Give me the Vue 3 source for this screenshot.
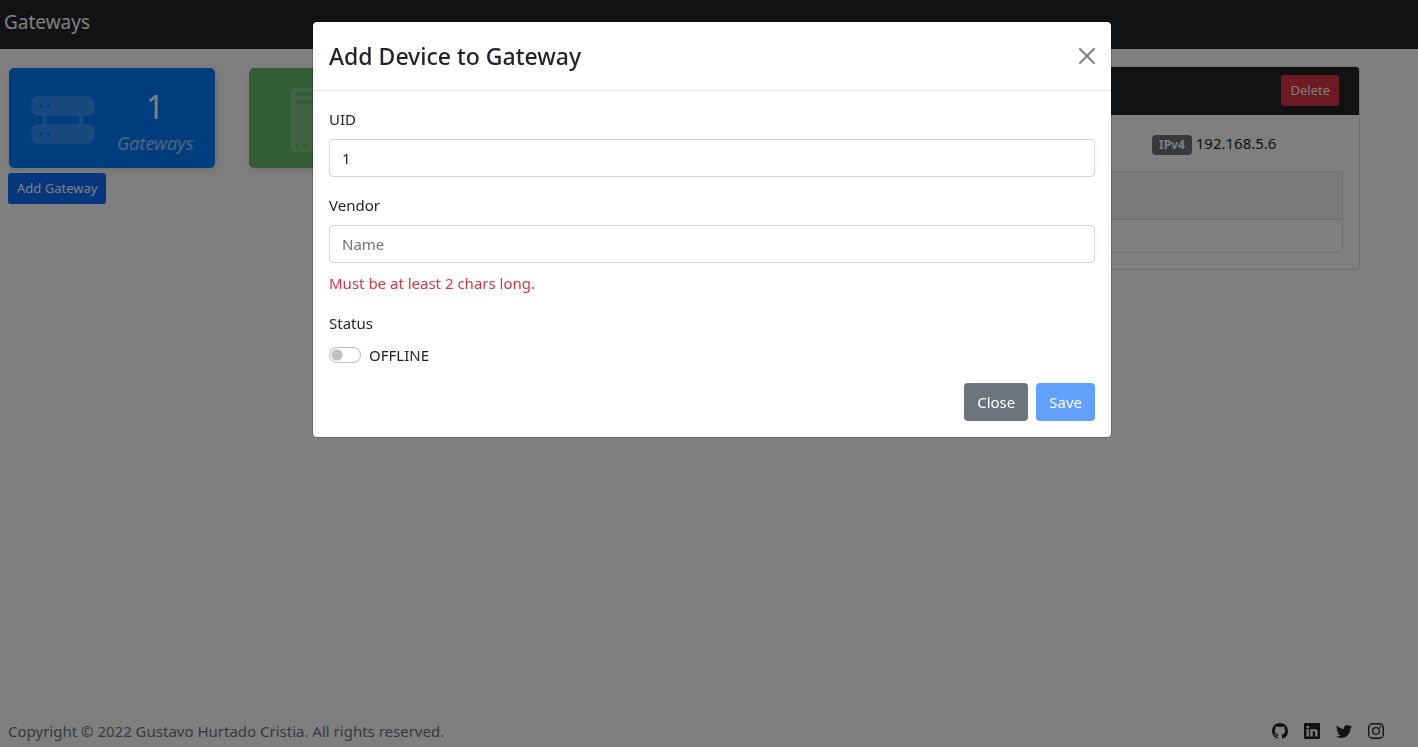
<script setup>
import { computed, ref } from 'vue'

const uid = ref('1')
const vendor = ref('')
const online = ref(false)
const invalid = computed(() => vendor.value.length < 2)
</script>

<template>
  <div class="page">
    <header class="navbar"><a class="brand" href="#">Gateways</a></header>

    <main class="content">
      <section class="summary">
        <div class="tiles">
          <article class="tile blue">
            <svg class="tile-icon" viewBox="0 0 16 16" aria-hidden="true">
              <path d="M2 2a2 2 0 0 0-2 2v1a2 2 0 0 0 2 2h1v2H2a2 2 0 0 0-2 2v1a2 2 0 0 0 2 2h12a2 2 0 0 0 2-2v-1a2 2 0 0 0-2-2h-1V7h1a2 2 0 0 0 2-2V4a2 2 0 0 0-2-2H2zm.5 3a.5.5 0 1 1 0-1 .5.5 0 0 1 0 1zm2 0a.5.5 0 1 1 0-1 .5.5 0 0 1 0 1zm-2 7a.5.5 0 1 1 0-1 .5.5 0 0 1 0 1zm2 0a.5.5 0 1 1 0-1 .5.5 0 0 1 0 1zM12 7v2H4V7h8z" />
            </svg>
            <div class="tile-text">
              <span class="count">1</span>
              <span class="caption">Gateways</span>
            </div>
          </article>
          <article class="tile green">
            <svg class="tile-icon" viewBox="0 0 16 16" aria-hidden="true">
              <path fill-rule="evenodd" d="M5 0a1 1 0 0 0-1 1v14a1 1 0 0 0 1 1h6a1 1 0 0 0 1-1V1a1 1 0 0 0-1-1H5zm.5 14a.5.5 0 1 1 0 1 .5.5 0 0 1 0-1zm2 0a.5.5 0 1 1 0 1 .5.5 0 0 1 0-1zM5 1.500a.5.5 0 0 1 .5-.5h5a.5.5 0 0 1 0 1h-5a.5.5 0 0 1-.5-.5zM5.500 3h5a.5.5 0 0 1 0 1h-5a.5.5 0 0 1 0-1z" />
            </svg>
          </article>
        </div>
        <button class="btn small primary" type="button">Add Gateway</button>
      </section>

      <section class="gateway">
        <div class="gateway-head">
          <button class="btn small danger" type="button">Delete</button>
        </div>
        <div class="gateway-body">
          <p class="address"><span class="badge">IPv4</span> 192.168.5.6</p>
          <div class="devices">
            <div class="devices-head"></div>
            <div class="devices-row"></div>
          </div>
        </div>
      </section>
    </main>

    <footer class="footer">
      <span>Copyright © 2022 Gustavo Hurtado Cristia. All rights reserved.</span>
      <nav class="social">
        <a href="#" aria-label="GitHub">
          <svg viewBox="0 0 16 16"><path d="M8 0C3.58 0 0 3.58 0 8c0 3.54 2.29 6.53 5.47 7.59.4.07.55-.17.55-.38 0-.19-.01-.82-.01-1.49-2.01.37-2.53-.49-2.69-.94-.09-.23-.48-.94-.82-1.13-.28-.15-.68-.52-.01-.53.63-.01 1.08.58 1.23.82.72 1.21 1.87.87 2.33.66.07-.52.28-.87.51-1.07-1.78-.2-3.64-.89-3.64-3.95 0-.87.31-1.59.82-2.15-.08-.2-.36-1.02.08-2.12 0 0 .67-.21 2.2.82.64-.18 1.32-.27 2-.27.68 0 1.36.09 2 .27 1.53-1.04 2.2-.82 2.2-.82.44 1.1.16 1.92.08 2.12.51.56.82 1.27.82 2.15 0 3.07-1.87 3.75-3.65 3.95.29.25.54.73.54 1.48 0 1.07-.01 1.93-.01 2.2 0 .21.15.46.55.38A8.012 8.012 0 0 0 16 8c0-4.42-3.58-8-8-8z" /></svg>
        </a>
        <a href="#" aria-label="LinkedIn">
          <svg viewBox="0 0 16 16"><path d="M0 1.146C0 .513.526 0 1.175 0h13.650C15.474 0 16 .513 16 1.146v13.708c0 .633-.526 1.146-1.175 1.146H1.175C.526 16 0 15.487 0 14.854V1.146zm4.943 12.248V6.169H2.542v7.225h2.401zm-1.200-8.212c.837 0 1.358-.554 1.358-1.248-.015-.709-.520-1.248-1.342-1.248-.822 0-1.359.540-1.359 1.248 0 .694.521 1.248 1.327 1.248h.016zm4.908 8.212V9.359c0-.216.016-.432.080-.586.173-.431.568-.878 1.232-.878.869 0 1.216.662 1.216 1.634v3.865h2.401V9.250c0-2.220-1.184-3.252-2.764-3.252-1.274 0-1.845.700-2.165 1.193v.025h-.016a5.540 5.540 0 0 1 .016-.025V6.169h-2.400c.030.678 0 7.225 0 7.225h2.400z" /></svg>
        </a>
        <a href="#" aria-label="Twitter">
          <svg viewBox="0 0 16 16"><path d="M5.026 15c6.038 0 9.341-5.003 9.341-9.334 0-.14 0-.282-.006-.422A6.685 6.685 0 0 0 16 3.542a6.658 6.658 0 0 1-1.889.518 3.301 3.301 0 0 0 1.447-1.817 6.533 6.533 0 0 1-2.087.793A3.286 3.286 0 0 0 7.875 6.03a9.325 9.325 0 0 1-6.767-3.429 3.289 3.289 0 0 0 1.018 4.382A3.323 3.323 0 0 1 .64 6.575v.045a3.288 3.288 0 0 0 2.632 3.218 3.203 3.203 0 0 1-.865.115 3.23 3.23 0 0 1-.614-.057 3.283 3.283 0 0 0 3.067 2.277A6.588 6.588 0 0 1 .78 13.58a6.32 6.32 0 0 1-.78-.045A9.344 9.344 0 0 0 5.026 15z" /></svg>
        </a>
        <a href="#" aria-label="Instagram">
          <svg viewBox="0 0 16 16">
            <rect x=".7" y=".7" width="14.6" height="14.6" rx="4" fill="none" stroke="currentColor" stroke-width="1.4" />
            <circle cx="8" cy="8" r="3.4" fill="none" stroke="currentColor" stroke-width="1.4" />
            <circle cx="12.300" cy="3.700" r="1" />
          </svg>
        </a>
      </nav>
    </footer>

    <div class="backdrop">
      <form class="modal" role="dialog" aria-labelledby="modal-title" @submit.prevent>
        <div class="modal-head">
          <h1 id="modal-title">Add Device to Gateway</h1>
          <button class="close" type="button" aria-label="Close dialog">
            <svg viewBox="0 0 16 16"><path d="M.293.293a1 1 0 0 1 1.414 0L8 6.586 14.293.293a1 1 0 1 1 1.414 1.414L9.414 8l6.293 6.293a1 1 0 0 1-1.414 1.414L8 9.414l-6.293 6.293a1 1 0 0 1-1.414-1.414L6.586 8 .293 1.707a1 1 0 0 1 0-1.414z" /></svg>
          </button>
        </div>
        <div class="modal-body">
          <div class="field">
            <label for="uid">UID</label>
            <input id="uid" v-model="uid" class="control" type="text" />
          </div>
          <div class="field">
            <label for="vendor">Vendor</label>
            <input id="vendor" v-model="vendor" class="control" type="text" placeholder="Name" />
            <p v-if="invalid" class="error">Must be at least 2 chars long.</p>
          </div>
          <div class="field">
            <span>Status</span>
            <div class="switch-row">
              <input id="status" v-model="online" class="switch" type="checkbox" role="switch" />
              <label for="status">{{ online ? 'ONLINE' : 'OFFLINE' }}</label>
            </div>
          </div>
          <div class="actions">
            <button class="btn secondary" type="button">Close</button>
            <button class="btn primary" type="submit" :disabled="invalid">Save</button>
          </div>
        </div>
      </form>
    </div>
  </div>
</template>

<style>
body {
  margin: 0;
  background: #fff;
}
</style>

<style scoped>
.page,
.page * {
  box-sizing: border-box;
}
.page {
  display: flex;
  flex-direction: column;
  min-height: 100vh;
  color: #212529;
  font-family: 'Noto Sans', 'Open Sans', sans-serif;
  font-size: 15px;
  line-height: 24px;
}
h1,
p {
  margin: 0;
}
svg {
  display: block;
  fill: currentColor;
}
button,
input {
  font: inherit;
}
.navbar {
  display: flex;
  height: 49px;
  padding: 8px 4px;
  background: #212529;
}
.brand {
  color: #fff;
  font-size: 19px;
  line-height: 29px;
  text-decoration: none;
}
.content {
  display: grid;
  grid-template-columns: 1fr 2fr;
  flex: 1;
  align-items: start;
  gap: 24px;
  padding: 17px 58px 0 8px;
}
.summary {
  display: flex;
  flex-direction: column;
  align-items: flex-start;
  gap: 5px;
  padding-top: 2px;
}
.tiles {
  display: flex;
  gap: 34px;
  padding-left: 1px;
}
.tile {
  display: flex;
  align-items: center;
  gap: 22px;
  width: 206px;
  height: 100px;
  padding: 4px 22px 0;
  border-radius: 5px;
  box-shadow: 2px 2px 10px #dadada;
  color: #fff;
}
.blue {
  background: #007bff;
}
.green {
  padding: 4px 26px 0;
  background: #66bb6a;
}
.tile-icon {
  flex: none;
  width: 64px;
  height: 64px;
  opacity: 0.2;
}
.tile-text {
  display: flex;
  flex-direction: column;
  align-items: center;
  padding-bottom: 2px;
}
.count {
  font-size: 32px;
  line-height: 48px;
}
.caption {
  font-size: 18px;
  font-style: italic;
  opacity: 0.6;
}
.btn {
  padding: 6px 12px;
  border: 1px solid transparent;
  border-radius: 4px;
  color: #fff;
}
.small {
  padding: 4px 8px;
  border-radius: 3px;
  font-size: 13px;
  line-height: 21px;
}
.primary {
  background: #0d6efd;
}
.secondary {
  background: #6c757d;
}
.danger {
  background: #dc3545;
}
.btn:disabled {
  opacity: 0.65;
}
.gateway {
  border: 1px solid rgba(0, 0, 0, 0.125);
  border-radius: 4px;
}
.gateway-head {
  display: flex;
  justify-content: flex-end;
  padding: 8px 20px 9px;
  border-radius: 3px 3px 0 0;
  background: #212529;
}
.gateway-body {
  display: flex;
  flex-direction: column;
  gap: 16px;
  padding: 16px;
}
.address {
  align-self: flex-end;
  width: 191px;
}
.badge {
  display: inline-block;
  padding: 4px 7px;
  border-radius: 4px;
  background: #6c757d;
  color: #fff;
  font-size: 12px;
  font-weight: 700;
  line-height: 12px;
}
.devices {
  border: 1px solid rgba(0, 0, 0, 0.125);
  border-radius: 4px;
}
.devices-head {
  height: 48px;
  border-bottom: 1px solid rgba(0, 0, 0, 0.125);
  background: rgba(0, 0, 0, 0.03);
}
.devices-row {
  height: 32px;
}
.footer {
  display: flex;
  align-items: center;
  justify-content: space-between;
  padding: 4px 34px 4px 8px;
  color: #6c757d;
}
.social {
  display: flex;
  gap: 16px;
}
.social a {
  color: #212529;
}
.social svg {
  width: 16px;
  height: 16px;
}
.backdrop {
  position: fixed;
  inset: 0;
  display: flex;
  align-items: flex-start;
  justify-content: center;
  padding: 21px 0 21px 6px;
  background: rgba(0, 0, 0, 0.5);
}
.modal {
  width: 100%;
  max-width: 800px;
  border: 1px solid rgba(0, 0, 0, 0.2);
  border-radius: 5px;
  background: #fff;
  background-clip: padding-box;
}
.modal-head {
  display: flex;
  align-items: center;
  justify-content: space-between;
  padding: 16px;
  border-bottom: 1px solid #dee2e6;
}
.modal-head h1 {
  font-size: 23px;
  font-weight: 500;
  line-height: 36px;
}
.close {
  padding: 0;
  border: 0;
  background: none;
  color: #000;
  opacity: 0.5;
}
.close svg {
  width: 16px;
  height: 16px;
}
.modal-body {
  display: flex;
  flex-direction: column;
  gap: 16px;
  padding: 16px;
}
.field {
  display: flex;
  flex-direction: column;
  gap: 8px;
}
.control {
  width: 100%;
  height: 38px;
  padding: 6px 12px;
  border: 1px solid #ced4da;
  border-radius: 4px;
  background: #fff;
  color: #212529;
}
.control::placeholder {
  color: #6c757d;
  opacity: 1;
}
.error {
  color: #dc3545;
}
.switch-row {
  display: flex;
  align-items: center;
  gap: 8px;
}
.switch {
  width: 32px;
  height: 16px;
  margin: 0;
  appearance: none;
  border: 1px solid rgba(0, 0, 0, 0.25);
  border-radius: 8px;
  background: radial-gradient(circle at 7px 7px, rgba(0, 0, 0, 0.25) 5px, transparent 6px);
}
.switch:checked {
  background: radial-gradient(circle at 23px 7px, #fff 5px, #0d6efd 6px);
}
.actions {
  display: flex;
  justify-content: flex-end;
  gap: 8px;
}
</style>
